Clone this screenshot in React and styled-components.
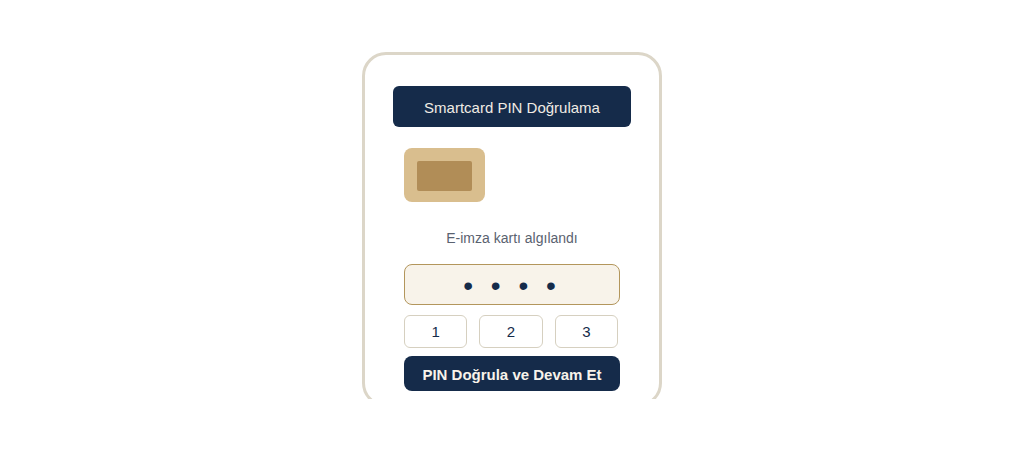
import React, { useState } from 'react';
import styled, { createGlobalStyle } from 'styled-components';

const GlobalStyle = createGlobalStyle`
  * {
    box-sizing: border-box;
  }

  body {
    margin: 0;
    background-color: #ffffff;
    font-family: 'Liberation Sans', Arial, sans-serif;
  }
`;

const Page = styled('main')`
  display: flex;
  justify-content: center;
  padding: 52px 16px;
`;

const Viewport = styled('div')`
  width: 100%;
  max-width: 300px;
  overflow: hidden;
`;

// the lower edge of the card runs out of the viewport
const Card = styled('form')`
  display: flex;
  flex-direction: column;
  margin-bottom: -8px;
  padding: 31px 28px 13px;
  border: 3px solid #dcd6c8;
  border-radius: 24px;
`;

const Title = styled('h1')`
  margin: 0;
  padding: 13px 0 10px;
  border-radius: 6px;
  background-color: #152b4a;
  color: #f0ece4;
  font-size: 15px;
  font-weight: 400;
  line-height: 18px;
  text-align: center;
`;

const Content = styled('div')`
  display: flex;
  flex-direction: column;
  padding: 21px 11px 0;
`;

const Chip = styled('div')`
  width: 81px;
  padding: 13px 13px 11px;
  border-radius: 8px;
  background-color: #d9be8e;
`;

const ChipContact = styled('div')`
  height: 30px;
  border-radius: 2px;
  background-color: #b18d57;
`;

const Status = styled('label')`
  margin: 26px 0 16px;
  color: #5a6270;
  font-size: 14px;
  line-height: 20px;
  text-align: center;
`;

const PinInput = styled('input')`
  width: 100%;
  height: 41px;
  padding: 2px 0 0;
  border: 1px solid #b3965c;
  border-radius: 8px;
  outline: 0;
  background-color: #f8f3ea;
  color: #152b4a;
  font-family: inherit;
  font-size: 28px;
  letter-spacing: 5px;
  text-align: center;
`;

const Keys = styled('div')`
  display: grid;
  grid-template-columns: repeat(3, 1fr);
  gap: 12px;
  margin: 10px 2px 8px 0;
`;

const Key = styled('button')`
  height: 33px;
  padding: 0;
  border: 1px solid #d6d0c0;
  border-radius: 6px;
  background-color: #ffffff;
  color: #152b4a;
  font-family: inherit;
  font-size: 15px;
  cursor: pointer;
`;

const SubmitBtn = styled('button')`
  height: 35px;
  margin: 0;
  padding: 1px 0 0;
  border: none;
  border-radius: 8px;
  background-color: #152b4a;
  color: #f8f3ea;
  font-family: inherit;
  font-size: 15px;
  font-weight: 700;
  cursor: pointer;
`;

const App = () => {
  const [pin, setPin] = useState('• • • •');

  return (
    <>
      <GlobalStyle />
      <Page>
        <Viewport>
          <Card onSubmit={(e) => e.preventDefault()}>
            <Title>Smartcard PIN Doğrulama</Title>
            <Content>
              <Chip>
                <ChipContact />
              </Chip>
              <Status htmlFor="pin">E-imza kartı algılandı</Status>
              <PinInput
                id="pin"
                value={pin}
                onChange={(e) => setPin(e.target.value)}
              />
              <Keys>
                {['1', '2', '3'].map((digit) => (
                  <Key key={digit} type="button">
                    {digit}
                  </Key>
                ))}
              </Keys>
              <SubmitBtn type="submit">PIN Doğrula ve Devam Et</SubmitBtn>
            </Content>
          </Card>
        </Viewport>
      </Page>
    </>
  );
};

export default App;
